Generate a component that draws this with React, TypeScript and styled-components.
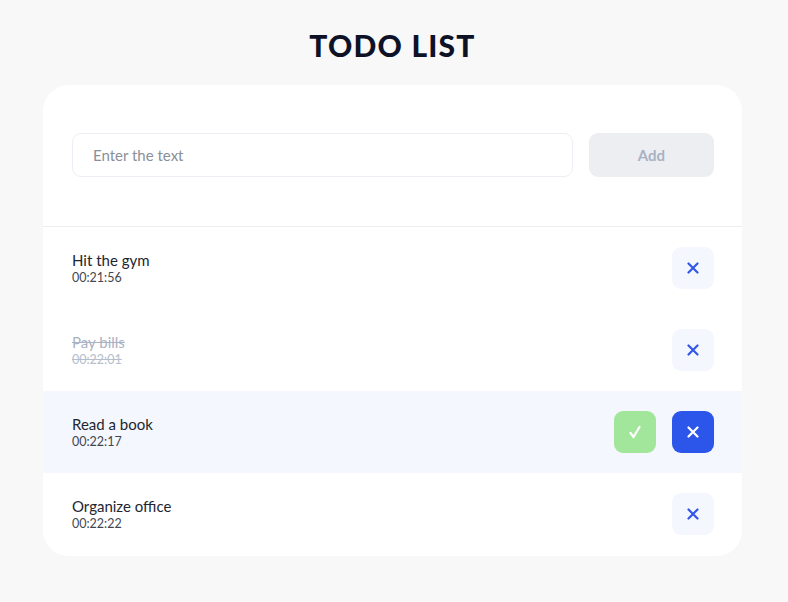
import React from "react";
import styled, { createGlobalStyle } from "styled-components";

const Global = createGlobalStyle`
  html, body { margin: 0; padding: 0; background: #f8f8f9; }
  body { font-family: Lato, "Noto Sans", sans-serif; }
  * { box-sizing: border-box; }
`;

const Page = styled.div`
  width: 788px;
  padding: 26px 46px 0 43px;
  display: flex;
  flex-direction: column;
  align-items: stretch;
`;

const Title = styled.h1`
  margin: 0 0 21px;
  text-align: center;
  font-size: 30px;
  line-height: 38px;
  font-weight: 900;
  color: #0e1227;
  letter-spacing: 1.2px;
  font-family: Lato, "Noto Sans", sans-serif;
`;

const Card = styled.div`
  background: #ffffff;
  border-radius: 26px;
  overflow: hidden;
  width: 699px;
  padding-bottom: 1px;
`;

const Form = styled.div`
  display: flex;
  gap: 16px;
  padding: 48px 28px 49px 29px;
  border-bottom: 1px solid #eceef2;
`;

const Input = styled.input`
  flex: 1;
  height: 44px;
  border: 1px solid #eceef3;
  border-radius: 9px;
  padding: 0 20px;
  font-size: 15px;
  font-family: Lato, "Noto Sans", sans-serif;
  color: #333;
  outline: none;
  &::placeholder { color: #8a8f99; }
`;

const AddButton = styled.button`
  width: 125px;
  height: 44px;
  border: none;
  border-radius: 9px;
  background: #edeef2;
  color: #a9b1c4;
  font-size: 15px;
  font-weight: 700;
  font-family: Lato, "Noto Sans", sans-serif;
`;

const Row = styled.div<{ $active?: boolean }>`
  height: 82px;
  display: flex;
  align-items: center;
  padding: 0 28px 0 29px;
  background: ${(p) => (p.$active ? "#f4f7fe" : "#ffffff")};
`;

const Info = styled.div<{ $done?: boolean }>`
  flex: 1;
  display: flex;
  flex-direction: column;
  font-family: Lato, "Noto Sans", sans-serif;
  text-decoration: ${(p) => (p.$done ? "line-through" : "none")};
  color: ${(p) => (p.$done ? "#aab3c5" : "#222631")};
`;

const Name = styled.span`
  font-size: 15px;
  line-height: 19px;
`;

const Time = styled.span`
  font-size: 12.5px;
  line-height: 16px;
  opacity: 0.85;
`;

const Actions = styled.div`
  display: flex;
  gap: 16px;
`;

const IconButton = styled.button<{ $variant: "check" | "x" | "xActive" }>`
  width: 42px;
  height: 42px;
  border: none;
  border-radius: 9px;
  display: flex;
  align-items: center;
  justify-content: center;
  padding: 0;
  background: ${(p) =>
    p.$variant === "check" ? "#a2e69c" : p.$variant === "xActive" ? "#2c56ea" : "#f4f7fe"};
  color: ${(p) => (p.$variant === "x" ? "#3356ea" : "#ffffff")};
`;

const XIcon = () => (
  <svg width="12" height="12" viewBox="0 0 12 12" fill="none" stroke="currentColor" strokeWidth="2.2" strokeLinecap="round">
    <path d="M1.5 1.5 L10.5 10.5 M10.5 1.5 L1.5 10.5" />
  </svg>
);

const CheckIcon = () => (
  <svg width="12" height="14" viewBox="0 0 12 14" fill="none" stroke="currentColor" strokeWidth="2.2" strokeLinecap="round" strokeLinejoin="round">
    <path d="M1.5 8 L4.5 12 L10.5 2" />
  </svg>
);

const todos = [
  { name: "Hit the gym", time: "00:21:56", done: false, active: false },
  { name: "Pay bills", time: "00:22:01", done: true, active: false },
  { name: "Read a book", time: "00:22:17", done: false, active: true },
  { name: "Organize office", time: "00:22:22", done: false, active: false },
];

export default function App() {
  return (
    <>
      <Global />
      <Page>
        <Title>TODO LIST</Title>
        <Card>
          <Form>
            <Input placeholder="Enter the text" />
            <AddButton>Add</AddButton>
          </Form>
          {todos.map((t) => (
            <Row key={t.name} $active={t.active}>
              <Info $done={t.done}>
                <Name>{t.name}</Name>
                <Time>{t.time}</Time>
              </Info>
              <Actions>
                {t.active && (
                  <IconButton $variant="check">
                    <CheckIcon />
                  </IconButton>
                )}
                <IconButton $variant={t.active ? "xActive" : "x"}>
                  <XIcon />
                </IconButton>
              </Actions>
            </Row>
          ))}
        </Card>
      </Page>
    </>
  );
}
